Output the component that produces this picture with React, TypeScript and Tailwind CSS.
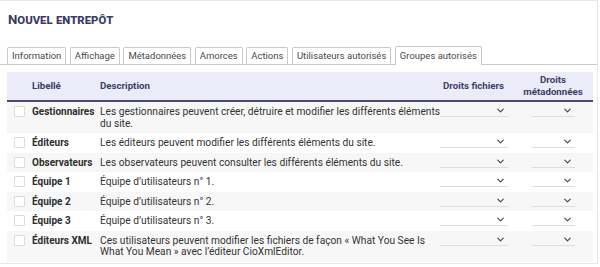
import { ChevronDown } from 'lucide-react';

const tabs = [
  'Information',
  'Affichage',
  'Métadonnées',
  'Amorces',
  'Actions',
  'Utilisateurs autorisés',
  'Groupes autorisés',
];

const groups = [
  {
    label: 'Gestionnaires',
    description:
      'Les gestionnaires peuvent créer, détruire et modifier les différents éléments du site.',
  },
  { label: 'Éditeurs', description: 'Les éditeurs peuvent modifier les différents éléments du site.' },
  { label: 'Observateurs', description: 'Les observateurs peuvent consulter les différents éléments du site.' },
  { label: 'Équipe 1', description: 'Équipe d’utilisateurs n° 1.' },
  { label: 'Équipe 2', description: 'Équipe d’utilisateurs n° 2.' },
  { label: 'Équipe 3', description: 'Équipe d’utilisateurs n° 3.' },
  {
    label: 'Éditeurs XML',
    description:
      'Ces utilisateurs peuvent modifier les fichiers de façon « What You See Is What You Mean » avec l’éditeur CioXmlEditor.',
  },
];

function FakeSelect({ width }: { width: string }) {
  return (
    <div className={`${width} h-[12px] flex items-center justify-end pr-[2px] border-b border-[#dedede]`}>
      <ChevronDown size={11} strokeWidth={2.4} className="text-[#444]" />
    </div>
  );
}

export default function App() {
  return (
    <div className="w-[600px] h-[267px] bg-white font-['Roboto',sans-serif]">
      <div className="w-[598px] h-[264px] border-t border-r border-b border-[#e8e8e8] bg-white">
        {/* Title */}
        <h1 className="pl-[8px] pt-[10px] text-[13.2px] leading-[18px] font-bold text-[#3b3c63] [font-variant:small-caps]">
          Nouvel entrepôt
        </h1>

        {/* Tabs */}
        <div className="mt-[17px] flex items-end gap-[3.5px] pl-[7px] border-b border-[#c9c9c9]">
          {tabs.map((tab, i) => {
            const active = i === tabs.length - 1;
            return (
              <div
                key={tab}
                className={`px-[4px] border border-b-0 border-[#c9c9c9] rounded-t-[2px] text-[9.5px] text-[#4a4a4a] ${
                  active ? 'h-[19px] leading-[18px] bg-white -mb-px' : 'h-[17px] leading-[16px]'
                }`}
              >
                {tab}
              </div>
            );
          })}
        </div>

        {/* Table */}
        <div className="pl-[7px] pt-[7px]">
          <table className="w-[586px] table-fixed border-collapse text-[10.2px]">
            <colgroup>
              <col className="w-[22px]" />
              <col className="w-[68px]" />
              <col className="w-[345px]" />
              <col className="w-[71px]" />
              <col className="w-[80px]" />
            </colgroup>
            <thead>
              <tr className="bg-[#ebebfa] text-[#3d3e66] font-bold text-[9.7px] h-[29px] border-b-2 border-[#4b4c70] leading-[12px]">
                <th></th>
                <th className="text-left px-[3px]">Libellé</th>
                <th className="text-left px-[3px]">Description</th>
                <th className="text-left pl-[1px]">Droits fichiers</th>
                <th className="text-center">
                  Droits
                  <br />
                  métadonnées
                </th>
              </tr>
            </thead>
            <tbody className="text-[#333] leading-[11.5px]">
              {groups.map((g, i) => (
                <tr key={g.label} className={i % 2 === 0 ? 'bg-[#f7f7f7]' : 'bg-white'}>
                  <td className="align-top pt-[4px] pb-[4px] pl-[7px]">
                    <div className="w-[11px] h-[11px] border border-[#dcdcdc] bg-white rounded-[1px]" />
                  </td>
                  <td className="align-top py-[4px] px-[3px] font-bold text-[10px] text-[#2e2e2e] whitespace-nowrap">
                    {g.label}
                  </td>
                  <td className="align-top py-[4px] pl-[3px] pr-0">{g.description}</td>
                  <td className="align-top pt-[3px]">
                    <div className="-ml-[2px]">
                      <FakeSelect width="w-[68px]" />
                    </div>
                  </td>
                  <td className="align-top pt-[3px]">
                    <div className="flex justify-center">
                      <FakeSelect width="w-[43px]" />
                    </div>
                  </td>
                </tr>
              ))}
            </tbody>
          </table>
        </div>
      </div>
    </div>
  );
}
